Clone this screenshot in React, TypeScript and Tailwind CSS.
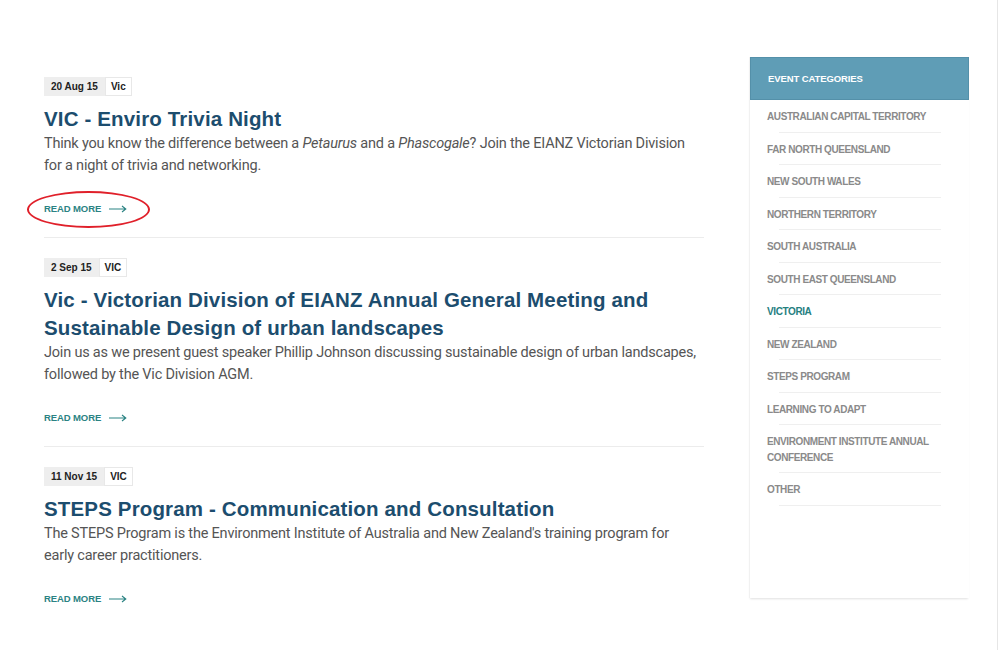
import React from 'react';

const ARTICLES = [
  {
    date: '20 Aug 15',
    tag: 'Vic',
    title: 'VIC - Enviro Trivia Night',
    body: (
      <>
        Think you know the difference between a <em>Petaurus</em> and a <em>Phascogale</em>? Join the EIANZ Victorian Division
        for a night of trivia and networking.
      </>
    ),
    circled: true,
  },
  {
    date: '2 Sep 15',
    tag: 'VIC',
    title: 'Vic - Victorian Division of EIANZ Annual General Meeting and Sustainable Design of urban landscapes',
    body: (
      <>
        Join us as we present guest speaker Phillip Johnson discussing sustainable design of urban landscapes,
        followed by the Vic Division AGM.
      </>
    ),
  },
  {
    date: '11 Nov 15',
    tag: 'VIC',
    title: 'STEPS Program - Communication and Consultation',
    body: (
      <>
        The STEPS Program is the Environment Institute of Australia and New Zealand's training program for early
        career practitioners.
      </>
    ),
  },
];

const CATEGORIES = [
  'Australian Capital Territory',
  'Far North Queensland',
  'New South Wales',
  'Northern Territory',
  'South Australia',
  'South East Queensland',
  'Victoria',
  'New Zealand',
  'Steps Program',
  'Learning to Adapt',
  'Environment Institute Annual Conference',
  'Other',
];

const SANS = '"Liberation Sans", Arial, sans-serif';

const Arrow = () => (
  <svg width="18" height="8" viewBox="0 0 18 8" fill="none" className="ml-[8px]">
    <path d="M0 4H16.5M13 1L16.8 4L13 7" stroke="#2b8383" strokeWidth="1.1" />
  </svg>
);

export default function App() {
  return (
    <div className="w-[998px] h-[650px] border-r border-[#e6e6e6] bg-white flex" style={{ fontFamily: SANS }}>
      <main className="w-[660px] ml-[44px] pt-[57px]">
        {ARTICLES.map((a, i) => (
          <article key={i} className={`pt-[20px] pb-[20px] ${i < ARTICLES.length - 1 ? 'border-b border-[#ececec]' : ''}`}>
            <div className="flex text-[10px] font-bold leading-[19px] text-[#222]">
              <span className="bg-[#eeeeee] px-[7px]">{a.date}</span>
              <span className="bg-white border border-[#e8e8e8] px-[5px] leading-[17px]">{a.tag}</span>
            </div>
            <h2 className="mt-[9px] text-[20.5px] font-bold leading-[28px] tracking-[0.15px] text-[#1c4d6e]">{a.title}</h2>
            <p
              className="w-[655px] text-[14.5px] leading-[22px] tracking-[-0.2px] text-[#555]"
              style={{ fontFamily: 'Roboto, "Liberation Sans", sans-serif' }}
            >
              {a.body}
            </p>
            <div className="relative mt-[24px] flex items-center h-[16px]">
              <span className="text-[9.5px] font-bold text-[#2b8383] tracking-[-0.1px]">READ MORE</span>
              <Arrow />
              {a.circled && (
                <span className="absolute left-[-17px] top-[-10px] w-[123px] h-[37px] rounded-[50%] border-2 border-[#e0202a]" />
              )}
            </div>
          </article>
        ))}
      </main>

      <aside className="ml-[45px] mt-[57px] w-[220px] h-[541px] bg-white border-l border-[#f1f1f1] shadow-[0_2px_2px_-1px_rgba(0,0,0,0.12)]">
        <div className="h-[43px] bg-[#5f9db6] border border-[#5490a9] flex items-center pl-[17px] pt-px text-[9.5px] font-bold text-white tracking-[-0.1px]">
          EVENT CATEGORIES
        </div>
        <ul>
          {CATEGORIES.map((c) => (
            <li key={c}>
              <div
                className={`pl-[17px] pr-[30px] pt-[9px] pb-[7px] text-[10px] font-bold uppercase leading-[15.5px] tracking-[-0.4px] ${
                  c === 'Victoria' ? 'text-[#26807f]' : 'text-[#8a8a8a]'
                }`}
              >
                {c}
              </div>
              <div className="ml-[29px] mr-[28px] h-px bg-[#efefef]" />
            </li>
          ))}
        </ul>
      </aside>
    </div>
  );
}
